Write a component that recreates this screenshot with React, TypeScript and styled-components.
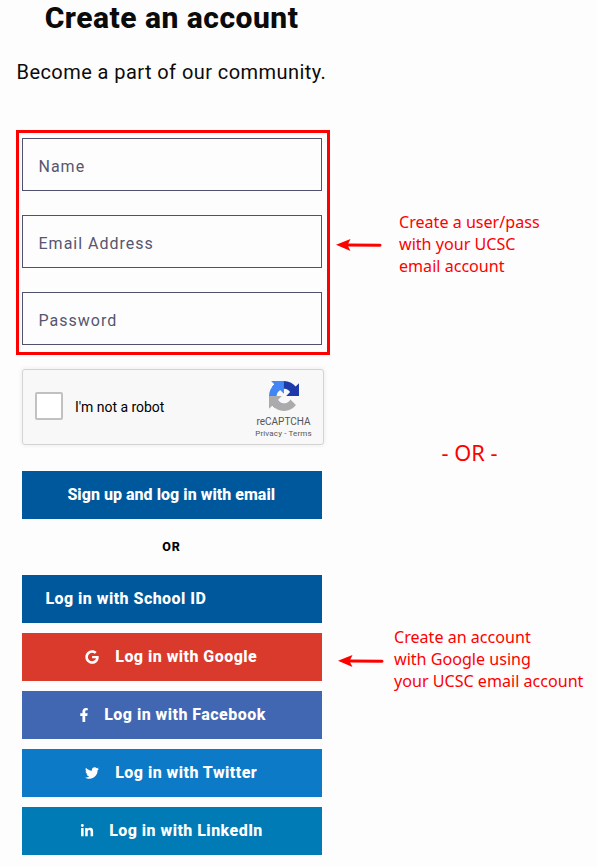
import React from 'react';
import styled, { createGlobalStyle } from 'styled-components';
import { FaFacebookF, FaGoogle, FaLinkedinIn, FaTwitter } from 'react-icons/fa';

const GlobalStyle = createGlobalStyle`
  * { box-sizing: border-box; }
  body { margin: 0; background: #fdfdfd; overflow: hidden; }
`;

const Page = styled.div`
  display: flex;
  width: 597px;
  height: 867px;
  overflow: hidden;
  font-family: Roboto, sans-serif;
  color: #0b0b0b;
`;

const SignUp = styled.main`
  width: 314px;
  margin-left: 16px;
  flex: none;
`;

const Title = styled.h1`
  margin: 0;
  padding-left: 28.7px;
  height: 36px;
  font-size: 30px;
  line-height: 36px;
  font-weight: 800;
  letter-spacing: 0.5px;
  white-space: nowrap;
`;

const Subtitle = styled.p`
  margin: 20px 0 0;
  padding-left: 0.5px;
  height: 32px;
  font-size: 20px;
  line-height: 32px;
  letter-spacing: 0.43px;
  white-space: nowrap;
`;

const Highlight = styled.div`
  display: grid;
  align-content: start;
  gap: 24px;
  margin-top: 42px;
  height: 225px;
  padding: 5px 5px 0 3px;
  border: 3px solid #fe0000;
`;

const Field = styled.input`
  width: 300px;
  height: 53px;
  padding: 3px 16px 0 15.5px;
  border: 1px solid #50506f;
  border-radius: 0;
  background: #fdfdfd;
  font: 400 16px/20px Roboto, sans-serif;
  letter-spacing: 1px;
  &::placeholder { color: #56566f; opacity: 1; }
`;

const Captcha = styled.div`
  display: flex;
  width: 302px;
  height: 76px;
  margin: 14px 0 0 6px;
  padding-left: 12px;
  align-items: center;
  border: 1px solid #d3d3d3;
  border-radius: 3px;
  background: #f8f8f8;
  box-shadow: 0 0 4px 1px rgba(0, 0, 0, 0.06);
`;

const Check = styled.span`
  width: 28px;
  height: 28px;
  margin-bottom: 2px;
  border: 2px solid #c1c1c1;
  border-radius: 2px;
  background: #fff;
`;

const CheckLabel = styled.span`
  flex: 1;
  margin-left: 12px;
  font-size: 14px;
  letter-spacing: -0.03px;
  color: #000;
`;

const Brand = styled.div`
  display: flex;
  flex-direction: column;
  align-items: center;
  align-self: flex-start;
  width: 79px;
  padding-top: 11px;
  color: #555;
`;

const BrandName = styled.span`
  margin-top: 4px;
  font-size: 10px;
  line-height: 13px;
`;

const BrandLinks = styled.span`
  font-size: 8px;
  line-height: 11px;
  letter-spacing: 0.15px;
`;

const Button = styled.button<{
  $color: string;
  $start?: boolean;
  $above?: number;
  $iconGap?: number;
  $spacing?: number;
}>`
  display: flex;
  align-items: center;
  justify-content: ${(p) => (p.$start ? 'flex-start' : 'center')};
  gap: ${(p) => p.$iconGap ?? 16}px;
  width: 300px;
  height: 48px;
  margin: ${(p) => p.$above ?? 10}px 0 0 6px;
  padding: ${(p) => (p.$start ? '0 23.4px' : '0 1.5px 0 0')};
  border: 0;
  background: ${(p) => p.$color};
  color: #fff;
  font: 800 16px/20px Roboto, sans-serif;
  letter-spacing: ${(p) => p.$spacing ?? 0.46}px;
  white-space: nowrap;
  svg { flex: none; }
`;

const Divider = styled.div`
  width: 300px;
  margin: 18px 0 0 6px;
  padding-right: 1px;
  height: 18px;
  font-size: 12.5px;
  line-height: 20px;
  font-weight: 800;
  letter-spacing: 1px;
  text-align: center;
  color: #000;
`;

const Notes = styled.aside`
  display: flex;
  flex-direction: column;
  padding-top: 211px;
  color: #fe0000;
  font-family: 'Noto Sans', sans-serif;
`;

const Note = styled.div<{ $indent: number; $gap: number; $drop: number }>`
  display: flex;
  align-items: center;
  gap: ${(p) => p.$gap}px;
  padding-left: ${(p) => p.$indent}px;
  font-size: 16.1px;
  line-height: 22px;
  white-space: nowrap;
  svg { margin-top: ${(p) => p.$drop}px; }
`;

const Either = styled.div`
  margin: 161px 0 158px;
  padding-left: 111.5px;
  height: 30px;
  font-size: 21.8px;
  line-height: 30px;
`;

const Arrow = () => (
  <svg width="46" height="14" viewBox="0 0 46 14">
    <path d="M12 7.1 44 7.2" stroke="#fe0000" strokeWidth="3" strokeLinecap="round" />
    <path d="M0 6.8 14.5 1 11.5 7 14.5 13Z" fill="#fe0000" />
  </svg>
);

const CaptchaLogo = () => (
  <svg width="30" height="30" viewBox="0 0 64 64">
    <path fill="#1c3aa9" d="M64 31.955l-.033-1.37V4.687l-7.16 7.16C50.948 4.674 42.033.093 32.05.093c-10.4 0-19.622 4.96-25.458 12.64l11.736 11.86a15.55 15.55 0 0 1 4.754-5.334c2.05-1.6 4.952-2.906 8.968-2.906.485 0 .86.057 1.135.163 4.976.393 9.288 3.14 11.828 7.124l-8.307 8.307L64 31.953" />
    <path fill="#4285f4" d="M31.862.094l-1.37.033H4.594l7.16 7.16C4.58 13.147 0 22.06 0 32.046c0 10.4 4.96 19.622 12.64 25.458L24.5 45.768a15.55 15.55 0 0 1-5.334-4.754c-1.6-2.05-2.906-4.952-2.906-8.968 0-.485.057-.86.163-1.135.393-4.976 3.14-9.288 7.124-11.828l8.307 8.307L31.86.095" />
    <path fill="#ababab" d="M.001 32.045l.033 1.37v25.898l7.16-7.16c5.86 7.173 14.774 11.754 24.76 11.754 10.4 0 19.622-4.96 25.458-12.64l-11.736-11.86a15.55 15.55 0 0 1-4.754 5.334c-2.05 1.6-4.952 2.906-8.968 2.906-.485 0-.86-.057-1.135-.163-4.976-.393-9.288-3.14-11.828-7.124l8.307-8.307L.001 32.046" />
  </svg>
);

export default function App() {
  return (
    <Page>
      <GlobalStyle />
      <SignUp>
        <Title>Create an account</Title>
        <Subtitle>Become a part of our community.</Subtitle>
        <Highlight>
          <Field placeholder="Name" />
          <Field placeholder="Email Address" />
          <Field placeholder="Password" type="password" />
        </Highlight>
        <Captcha>
          <Check />
          <CheckLabel>I'm not a robot</CheckLabel>
          <Brand>
            <CaptchaLogo />
            <BrandName>reCAPTCHA</BrandName>
            <BrandLinks>Privacy - Terms</BrandLinks>
          </Brand>
        </Captcha>
        <Button $color="#00589c" $above={26} $spacing={0.03}>Sign up and log in with email</Button>
        <Divider>OR</Divider>
        <Button $color="#00589c" $above={20} $start>Log in with School ID</Button>
        <Button $color="#d93a2b"><FaGoogle size={14} />Log in with Google</Button>
        <Button $color="#4267b2" $iconGap={13.5}><FaFacebookF size={14} />Log in with Facebook</Button>
        <Button $color="#0d7ac7"><FaTwitter size={14} />Log in with Twitter</Button>
        <Button $color="#007bb6" $iconGap={15.5}><FaLinkedinIn size={14} />Log in with LinkedIn</Button>
      </SignUp>
      <Notes>
        <Note $indent={6} $gap={17} $drop={2}>
          <Arrow />
          <span>Create a user/pass<br />with your UCSC<br />email account</span>
        </Note>
        <Either>- OR -</Either>
        <Note $indent={7.5} $gap={10.5} $drop={4}>
          <Arrow />
          <span>Create an account<br />with Google using<br />your UCSC email account</span>
        </Note>
      </Notes>
    </Page>
  );
}
